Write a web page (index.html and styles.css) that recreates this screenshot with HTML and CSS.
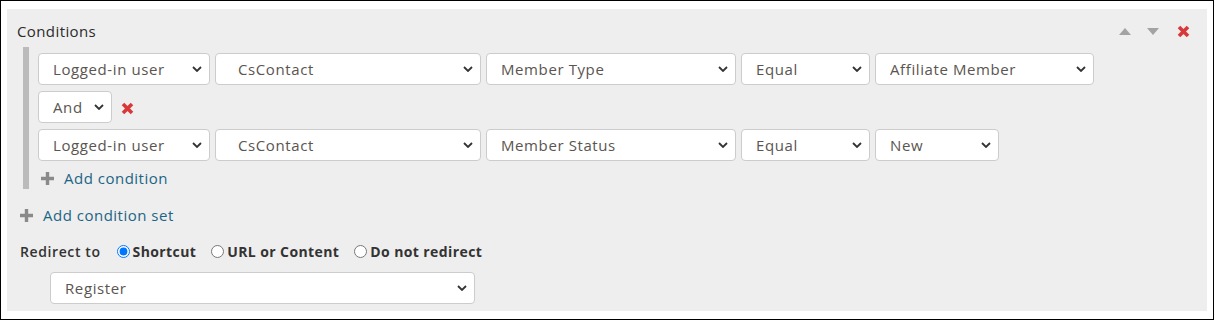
FILE: index.html
```html
<!DOCTYPE html>
<html>

<head>
    <title>Conditions</title>
    <link rel="stylesheet" href="styles.css">
</head>

<body>
    <div class="frame">
        <div class="panel">
            <div class="panel-header">
                <span class="panel-title">Conditions</span>
                <div class="panel-tools">
                    <svg class="tool-arrow" width="12" height="7" viewBox="0 0 12 7"><path d="M6 0 L12 7 L0 7 Z" fill="#a3a3a3"/></svg>
                    <svg class="tool-arrow arrow-down" width="12" height="7" viewBox="0 0 12 7"><path d="M0 0 L12 0 L6 7 Z" fill="#a3a3a3"/></svg>
                    <svg class="remove" width="13" height="13" viewBox="0 0 13 13"><path d="M2 2 L11 11 M11 2 L2 11" stroke="#d9383a" stroke-width="3.6" stroke-linecap="butt"/></svg>
                </div>
            </div>

            <div class="condition-set">
                <div class="cond-row">
                    <span class="select-wrap w-source"><select><option>Logged-in user</option></select><svg class="chevron" width="10" height="6" viewBox="0 0 10 6"><path d="M1 1 L5 5 L9 1" fill="none" stroke="#333" stroke-width="1.8"/></svg></span>
                    <span class="select-wrap w-object"><select class="indent"><option>CsContact</option></select><svg class="chevron" width="10" height="6" viewBox="0 0 10 6"><path d="M1 1 L5 5 L9 1" fill="none" stroke="#333" stroke-width="1.8"/></svg></span>
                    <span class="select-wrap w-field"><select><option>Member Type</option></select><svg class="chevron" width="10" height="6" viewBox="0 0 10 6"><path d="M1 1 L5 5 L9 1" fill="none" stroke="#333" stroke-width="1.8"/></svg></span>
                    <span class="select-wrap w-op"><select><option>Equal</option></select><svg class="chevron" width="10" height="6" viewBox="0 0 10 6"><path d="M1 1 L5 5 L9 1" fill="none" stroke="#333" stroke-width="1.8"/></svg></span>
                    <span class="select-wrap w-value"><select><option>Affiliate Member</option></select><svg class="chevron" width="10" height="6" viewBox="0 0 10 6"><path d="M1 1 L5 5 L9 1" fill="none" stroke="#333" stroke-width="1.8"/></svg></span>
                </div>
                <div class="cond-row">
                    <span class="select-wrap w-join"><select><option>And</option></select><svg class="chevron" width="10" height="6" viewBox="0 0 10 6"><path d="M1 1 L5 5 L9 1" fill="none" stroke="#333" stroke-width="1.8"/></svg></span>
                    <svg class="remove join-remove" width="13" height="13" viewBox="0 0 13 13"><path d="M2 2 L11 11 M11 2 L2 11" stroke="#d9383a" stroke-width="3.6"/></svg>
                </div>
                <div class="cond-row">
                    <span class="select-wrap w-source"><select><option>Logged-in user</option></select><svg class="chevron" width="10" height="6" viewBox="0 0 10 6"><path d="M1 1 L5 5 L9 1" fill="none" stroke="#333" stroke-width="1.8"/></svg></span>
                    <span class="select-wrap w-object"><select class="indent"><option>CsContact</option></select><svg class="chevron" width="10" height="6" viewBox="0 0 10 6"><path d="M1 1 L5 5 L9 1" fill="none" stroke="#333" stroke-width="1.8"/></svg></span>
                    <span class="select-wrap w-field"><select><option>Member Status</option></select><svg class="chevron" width="10" height="6" viewBox="0 0 10 6"><path d="M1 1 L5 5 L9 1" fill="none" stroke="#333" stroke-width="1.8"/></svg></span>
                    <span class="select-wrap w-op"><select><option>Equal</option></select><svg class="chevron" width="10" height="6" viewBox="0 0 10 6"><path d="M1 1 L5 5 L9 1" fill="none" stroke="#333" stroke-width="1.8"/></svg></span>
                    <span class="select-wrap w-new"><select><option>New</option></select><svg class="chevron" width="10" height="6" viewBox="0 0 10 6"><path d="M1 1 L5 5 L9 1" fill="none" stroke="#333" stroke-width="1.8"/></svg></span>
                </div>
                <a class="add-link" href="#">
                    <svg class="plus" width="13" height="13" viewBox="0 0 13 13"><path d="M6.5 0 V13 M0 6.5 H13" stroke="#8a8a8a" stroke-width="3.4"/></svg>
                    Add condition
                </a>
            </div>

            <a class="add-link add-set" href="#">
                <svg class="plus" width="13" height="13" viewBox="0 0 13 13"><path d="M6.5 0 V13 M0 6.5 H13" stroke="#8a8a8a" stroke-width="3.4"/></svg>
                Add condition set
            </a>

            <div class="redirect">
                <span class="redirect-label">Redirect to</span>
                <label class="radio"><input type="radio" name="redirect" checked>Shortcut</label>
                <label class="radio"><input type="radio" name="redirect">URL or Content</label>
                <label class="radio"><input type="radio" name="redirect">Do not redirect</label>
            </div>

            <div class="redirect-target">
                <span class="select-wrap w-target"><select><option>Register</option></select><svg class="chevron" width="10" height="6" viewBox="0 0 10 6"><path d="M1 1 L5 5 L9 1" fill="none" stroke="#333" stroke-width="1.8"/></svg></span>
            </div>
        </div>
    </div>
</body>
</html>
```

FILE: styles.css
```css
/* Conditions editor panel */
body {
    margin: 0;
    font-family: 'Open Sans', sans-serif;
    font-size: 15px;
    color: #2b2b2b;
    background-color: #ffffff;
}

.frame {
    width: 1214px;
    height: 320px;
    box-sizing: border-box;
    border: 1px solid #000000;
    padding: 8px 6px;
}

.panel {
    height: 100%;
    box-sizing: border-box;
    background-color: #eeeeee;
    padding: 12px 10px 6px 10px;
}

.panel-header {
    display: flex;
    justify-content: space-between;
    align-items: center;
    height: 20px;
    margin-bottom: 6px;
}

.panel-title {
    letter-spacing: 0.4px;
}

.panel-tools {
    display: flex;
    align-items: center;
    padding-right: 7px;
}

.arrow-down {
    margin-left: 16px;
    margin-right: 18px;
}

.condition-set {
    margin-left: 6px;
    border-left: 6px solid #bbbbbb;
    padding: 6px 0 1px 9px;
}

.cond-row {
    display: flex;
    align-items: center;
    gap: 5px;
    height: 32px;
    margin-bottom: 6px;
}

.cond-row:nth-child(3) {
    margin-bottom: 7px;
}

.select-wrap {
    position: relative;
    display: inline-block;
    height: 32px;
}

.select-wrap select {
    appearance: none;
    -webkit-appearance: none;
    width: 100%;
    height: 32px;
    box-sizing: border-box;
    border: 1px solid #cccccc;
    border-radius: 4px;
    background-color: #ffffff;
    padding: 0 24px 0 14px;
    font-family: 'Open Sans', sans-serif;
    font-size: 15px;
    letter-spacing: 0.6px;
    color: #5a5550;
    outline: none;
}

.select-wrap select.indent {
    padding-left: 22px;
}

.chevron {
    position: absolute;
    right: 8px;
    top: 13px;
    pointer-events: none;
}

.w-source { width: 172px; }
.w-object { width: 266px; }
.w-field { width: 250px; }
.w-op { width: 129px; }
.w-value { width: 219px; }
.w-new { width: 124px; }
.w-join { width: 74px; }
.w-target { width: 425px; }

.join-remove {
    margin-left: 4px;
    margin-top: 2px;
}

.add-link {
    display: flex;
    align-items: center;
    gap: 10px;
    height: 20px;
    color: #1b6585;
    text-decoration: none;
    letter-spacing: 0.5px;
    padding-left: 3px;
}

.add-set {
    margin-top: 16px;
}

.redirect {
    display: flex;
    align-items: center;
    height: 20px;
    margin-top: 16px;
    padding-left: 3px;
    font-size: 14px;
    letter-spacing: 0.4px;
}

.redirect-label {
    font-weight: 600;
    color: #333333;
    letter-spacing: 0.6px;
    margin-right: 16px;
}

.radio {
    display: flex;
    align-items: center;
    font-weight: 700;
    color: #333333;
    margin-right: 15px;
}

.radio input {
    margin: 0 3px 0 0;
    width: 13px;
    height: 13px;
}

.redirect-target {
    margin-top: 11px;
    padding-left: 33px;
}
```
